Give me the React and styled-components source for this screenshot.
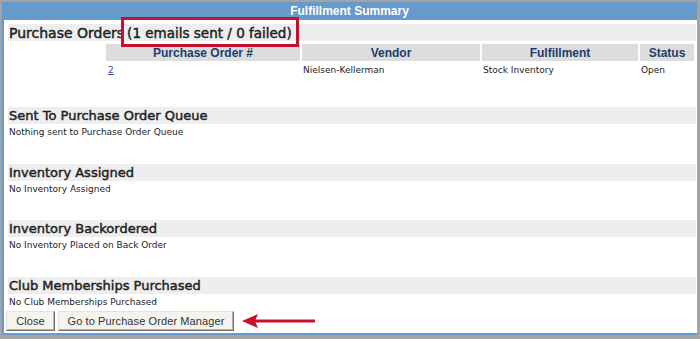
import styled, { createGlobalStyle } from "styled-components";

const GlobalStyle = createGlobalStyle`
  html, body {
    margin: 0;
    padding: 0;
    background: #ffffff;
  }
  * { box-sizing: border-box; }
`;

const Frame = styled.div`
  width: 700px;
  height: 339px;
  border: 2px solid #a3a3a3;
  border-right-width: 3px;
  border-bottom-width: 4px;
  background: #6699cc;
  display: flex;
  flex-direction: column;
  overflow: hidden;
`;

const TitleBar = styled.div`
  height: 18px;
  display: flex;
  align-items: center;
  justify-content: center;
  color: #ffffff;
  font-family: "Liberation Sans", Arial, sans-serif;
  font-weight: bold;
  font-size: 12px;
`;

const Body = styled.div`
  flex: 1;
  margin: 0 0 2px 2px;
  background: #ffffff;
  padding: 4px 1px 0 4px;
  display: flex;
  flex-direction: column;
`;

const SectionHead = styled.div`
  height: 17px;
  background: #eeeeee;
  padding-left: 1px;
  display: flex;
  align-items: center;
  font-family: "DejaVu Sans", Verdana, sans-serif;
  font-size: ${(p) => p.$size || 13}px;
  -webkit-text-stroke: 0.45px #222222;
  color: #222222;
  white-space: nowrap;
`;

const Note = styled.span`
  position: relative;
  margin-left: 3px;
  font-size: 13.5px;
  &::after {
    content: "";
    position: absolute;
    left: -6px;
    right: -7px;
    top: -8px;
    bottom: -6px;
    border: 3px solid #c8102e;
  }
`;

const SectionBody = styled.div`
  height: ${(p) => p.$h}px;
  font-family: "DejaVu Sans", Verdana, sans-serif;
  font-size: 9px;
  color: #222222;
`;

const Plain = styled.div`
  padding: 3px 0 0 1px;
`;

const Table = styled.div`
  display: grid;
  grid-template-columns: 96px 194px 178px 156px 54px;
  column-gap: 2px;
  margin-top: 3px;
`;

const Th = styled.div`
  height: 17px;
  background: ${(p) => (p.$blank ? "transparent" : "#dddddd")};
  display: flex;
  align-items: center;
  justify-content: center;
  font-family: "Liberation Sans", Arial, sans-serif;
  font-weight: bold;
  font-size: 12px;
  color: #1c3d6e;
`;

const Td = styled.div`
  padding: 4px 0 0 1px;
  font-family: "DejaVu Sans", Verdana, sans-serif;
  font-size: 9px;
  color: #222222;
`;

const Link = styled.a`
  color: #3a45b0;
  text-decoration: underline;
  padding-left: 1px;
`;

const Buttons = styled.div`
  display: flex;
  align-items: center;
  gap: 3px;
  margin: 1px 0 0 -2px;
`;

const Button = styled.button`
  width: ${(p) => p.$w}px;
  height: 20px;
  padding: 0;
  background: #f4f3ee;
  border: 1px solid;
  border-color: #e4e4e4 #6e6e6e #6e6e6e #e4e4e4;
  box-shadow: inset -1px -1px 0 #b4b4b4;
  font-family: "Liberation Sans", Arial, sans-serif;
  font-size: 11px;
  letter-spacing: 0.1px;
  color: #333333;
  line-height: 18px;
`;

const Arrow = () => (
  <svg width="73" height="14" viewBox="0 0 73 14" style={{ marginLeft: 5 }}>
    <line x1="12" y1="7" x2="73" y2="7" stroke="#c8102e" strokeWidth="3" />
    <polygon points="0,7 16,0 13,7 16,14" fill="#c8102e" />
  </svg>
);

const sections = [
  { title: "Sent To Purchase Order Queue", text: "Nothing sent to Purchase Order Queue", h: 40 },
  { title: "Inventory Assigned", text: "No Inventory Assigned", h: 39 },
  { title: "Inventory Backordered", text: "No Inventory Placed on Back Order", h: 40 },
  { title: "Club Memberships Purchased", text: "No Club Memberships Purchased", h: 16 },
];

export default function App() {
  return (
    <>
      <GlobalStyle />
      <Frame>
        <TitleBar>Fulfillment Summary</TitleBar>
        <Body>
          <SectionHead $size={14}>
            Purchase Orders<Note>(1 emails sent / 0 failed)</Note>
          </SectionHead>
          <SectionBody $h={66}>
            <Table>
              <Th $blank />
              <Th>Purchase Order #</Th>
              <Th>Vendor</Th>
              <Th>Fulfillment</Th>
              <Th>Status</Th>
              <Td />
              <Td>
                <Link href="#">2</Link>
              </Td>
              <Td>Nielsen-Kellerman</Td>
              <Td>Stock Inventory</Td>
              <Td>Open</Td>
            </Table>
          </SectionBody>
          {sections.map((s) => (
            <div key={s.title}>
              <SectionHead>{s.title}</SectionHead>
              <SectionBody $h={s.h}>
                <Plain>{s.text}</Plain>
              </SectionBody>
            </div>
          ))}
          <Buttons>
            <Button $w={49}>Close</Button>
            <Button $w={176}>Go to Purchase Order Manager</Button>
            <Arrow />
          </Buttons>
        </Body>
      </Frame>
    </>
  );
}
